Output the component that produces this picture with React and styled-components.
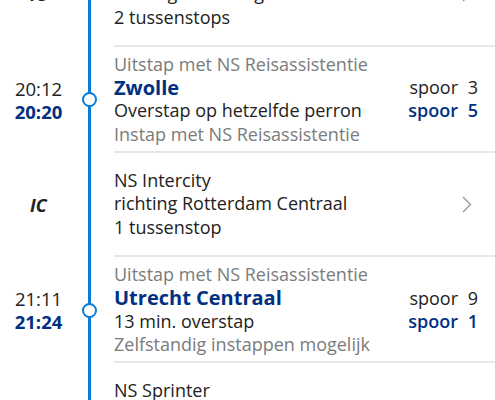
import React from "react";
import styled, { createGlobalStyle } from "styled-components";

const GlobalStyle = createGlobalStyle`
  html, body {
    margin: 0;
    padding: 0;
    background: #ffffff;
    overflow: hidden;
  }
  body {
    font-family: "Open Sans", "Noto Sans", sans-serif;
    color: #222222;
  }
`;

const Journey = styled.div`
  width: 495px;
  margin-top: -57px;
`;

const Row = styled.div`
  display: grid;
  grid-template-columns: 77px 25px 1fr;
`;

const TimeCol = styled.div`
  display: flex;
  flex-direction: column;
  align-items: center;
  justify-content: center;
  font-size: 18.5px;
  line-height: 23px;
`;

const Planned = styled.span`
  color: #222222;
`;

const Actual = styled.span`
  color: #003082;
  font-weight: 700;
`;

const TrainType = styled.span`
  font-weight: 700;
  font-style: italic;
  font-size: 18px;
  color: #222222;
`;

const Track = styled.div`
  position: relative;
  display: flex;
  align-items: center;
  justify-content: center;
  &::before {
    content: "";
    position: absolute;
    top: 0;
    bottom: 0;
    left: 11px;
    width: 3px;
    background: #0a7bd6;
  }
`;

const Stop = styled.span`
  position: relative;
  width: 11px;
  height: 11px;
  border-radius: 50%;
  border: 2.5px solid #0a7bd6;
  background: #ffffff;
`;

const Body = styled.div`
  margin-left: 12px;
  border-bottom: 2px solid #e8e8e8;
  display: flex;
  align-items: center;
  padding: ${(p) => (p.$leg ? "16px 17px 16px 0" : "6px 17px 5px 0")};
`;

const Lines = styled.div`
  flex: 1;
  font-size: 18px;
  line-height: 23.3px;
`;

const Muted = styled.div`
  color: #7b7b7b;
`;

const Station = styled.div`
  color: #003082;
  font-weight: 700;
  font-size: 20px;
`;

const Plain = styled.div`
  color: #222222;
`;

const Platforms = styled.div`
  display: flex;
  flex-direction: column;
  align-items: flex-end;
  font-size: 18px;
  line-height: 23px;
`;

const Platform = styled.div`
  display: flex;
  color: ${(p) => (p.$changed ? "#003082" : "#222222")};
  font-weight: ${(p) => (p.$changed ? 600 : 400)};
`;

const Num = styled.span`
  min-width: 20px;
  text-align: right;
`;

const Chevron = () => (
  <svg width="10" height="17" viewBox="0 0 10 17" style={{ marginRight: 6 }}>
    <path d="M1 1l7.5 7.5L1 16" fill="none" stroke="#9a9a9a" strokeWidth="1.4" />
  </svg>
);

const Leg = ({ type, name, direction, stops }) => (
  <Row>
    <TimeCol>
      <TrainType>{type}</TrainType>
    </TimeCol>
    <Track />
    <Body $leg>
      <Lines>
        <Plain>{name}</Plain>
        {direction && <Plain>{direction}</Plain>}
        {stops && <Plain>{stops}</Plain>}
      </Lines>
      {direction && <Chevron />}
    </Body>
  </Row>
);

const Transfer = ({ arr, dep, above, station, info, below, from, to }) => (
  <Row>
    <TimeCol>
      <Planned>{arr}</Planned>
      <Actual>{dep}</Actual>
    </TimeCol>
    <Track>
      <Stop />
    </Track>
    <Body>
      <Lines>
        <Muted>{above}</Muted>
        <Station>{station}</Station>
        <Plain>{info}</Plain>
        <Muted>{below}</Muted>
      </Lines>
      <Platforms>
        <Platform>
          spoor<Num>{from}</Num>
        </Platform>
        <Platform $changed>
          spoor<Num>{to}</Num>
        </Platform>
      </Platforms>
    </Body>
  </Row>
);

export default function App() {
  return (
    <>
      <GlobalStyle />
      <Journey>
        <Leg
          type="IC"
          name="NS Intercity"
          direction="richting Den Haag Centraal"
          stops="2 tussenstops"
        />
        <Transfer
          arr="20:12"
          dep="20:20"
          above="Uitstap met NS Reisassistentie"
          station="Zwolle"
          info="Overstap op hetzelfde perron"
          below="Instap met NS Reisassistentie"
          from="3"
          to="5"
        />
        <Leg
          type="IC"
          name="NS Intercity"
          direction="richting Rotterdam Centraal"
          stops="1 tussenstop"
        />
        <Transfer
          arr="21:11"
          dep="21:24"
          above="Uitstap met NS Reisassistentie"
          station="Utrecht Centraal"
          info="13 min. overstap"
          below="Zelfstandig instappen mogelijk"
          from="9"
          to="1"
        />
        <Leg type="" name="NS Sprinter" />
      </Journey>
    </>
  );
}
